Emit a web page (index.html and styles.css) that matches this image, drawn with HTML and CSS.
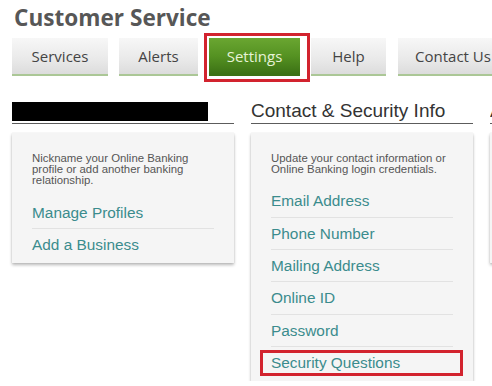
FILE: index.html
```html
<!DOCTYPE html>
<html lang="en">
<head>
<meta charset="utf-8">
<title>Customer Service</title>
<link rel="stylesheet" href="styles.css">
</head>
<body>
<div class="page">
  <h1 class="title">Customer Service</h1>
  <nav class="tabs">
    <a class="tab tab-services">Services</a>
    <a class="tab tab-alerts">Alerts</a>
    <a class="tab tab-settings tab-active">Settings<span class="mark mark-tab"></span></a>
    <a class="tab tab-help">Help</a>
    <a class="tab tab-contact">Contact Us</a>
  </nav>
  <div class="columns">
    <section class="col">
      <h2 class="col-head"><span class="redacted"></span></h2>
      <div class="card">
        <p class="desc">Nickname your Online Banking profile or add another banking relationship.</p>
        <ul class="links">
          <li><a class="link">Manage Profiles</a></li>
          <li><a class="link">Add a Business</a></li>
        </ul>
      </div>
    </section>
    <section class="col">
      <h2 class="col-head">Contact &amp; Security Info</h2>
      <div class="card">
        <p class="desc">Update your contact information or Online Banking login credentials.</p>
        <ul class="links">
          <li><a class="link">Email Address</a></li>
          <li><a class="link">Phone Number</a></li>
          <li><a class="link">Mailing Address</a></li>
          <li><a class="link">Online ID</a></li>
          <li><a class="link">Password</a></li>
          <li class="flagged"><a class="link">Security Questions</a><span class="mark mark-row"></span></li>
        </ul>
      </div>
    </section>
    <section class="col">
      <h2 class="col-head">A</h2>
      <div class="card card-edge"></div>
    </section>
  </div>
</div>
</body>
</html>
```

FILE: styles.css
```css
html, body {
  margin: 0;
  padding: 0;
  background: #ffffff;
  overflow: hidden;
}

.page {
  padding: 3px 0 0 12px;
  font-family: "Liberation Sans", Arial, sans-serif;
}

.title {
  margin: 0;
  padding-left: 2px;
  font-family: "Open Sans", sans-serif;
  font-weight: 700;
  font-size: 22.6px;
  line-height: 30px;
  color: #575757;
}

.tabs {
  display: flex;
  gap: 11px;
  margin-top: 5px;
  white-space: nowrap;
}

.tab {
  position: relative;
  flex-shrink: 0;
  height: 36px;
  text-align: center;
  font-family: "Open Sans", sans-serif;
  font-size: 15px;
  line-height: 37px;
  color: #444444;
  background: linear-gradient(#f7f7f7, #e9e9e9 60%, #dcdcdc);
  border-bottom: 2px solid #abc796;
}

.tab-services { width: 96px; }
.tab-alerts { width: 79px; }
.tab-settings { width: 91px; }
.tab-help { width: 75px; }
.tab-contact { width: 110px; margin-left: 1px; }

.tab-active {
  color: #e6f2d6;
  background: linear-gradient(#6aa631, #559222 50%, #3c7115);
  border-bottom-color: #3c7115;
}

.mark {
  position: absolute;
  border: 3px solid #d2232e;
  pointer-events: none;
}

.mark-tab {
  top: -5px;
  left: -5px;
  right: -10px;
  bottom: -8px;
}

.columns {
  display: flex;
  gap: 17px;
  margin-top: 24px;
}

.col {
  flex: 0 0 222px;
  width: 222px;
}

.col-head {
  margin: 0;
  height: 21px;
  padding-bottom: 2px;
  border-bottom: 1px solid #5c5c5c;
  font-size: 19px;
  font-weight: 400;
  line-height: 21px;
  color: #333333;
  white-space: nowrap;
  overflow: hidden;
}

.redacted {
  display: block;
  width: 196px;
  height: 19px;
  margin-top: 2px;
  background: #000000;
}

.card {
  margin-top: 9px;
  padding: 20px 0 3px;
  background: #f5f5f5;
  box-shadow: 0 2px 3px rgba(0, 0, 0, 0.28), 0 0 1px rgba(0, 0, 0, 0.12);
}

.card-edge {
  height: 107px;
}

.desc {
  margin: 0 18px 10px 20px;
  font-size: 11.4px;
  line-height: 11.2px;
  color: #555555;
}

.links {
  list-style: none;
  margin: 0 20px;
  padding: 0;
}

.links li {
  position: relative;
  padding: 7px 0 6px;
  border-top: 1px solid #e2e2e2;
}

.links li:first-child {
  border-top: 0;
}

.link {
  display: block;
  font-size: 15.4px;
  line-height: 18.3px;
  color: #3b8c8d;
  text-decoration: none;
  white-space: nowrap;
}

.mark-row {
  top: 3px;
  bottom: 2px;
  left: -11px;
  right: -10px;
}
```
